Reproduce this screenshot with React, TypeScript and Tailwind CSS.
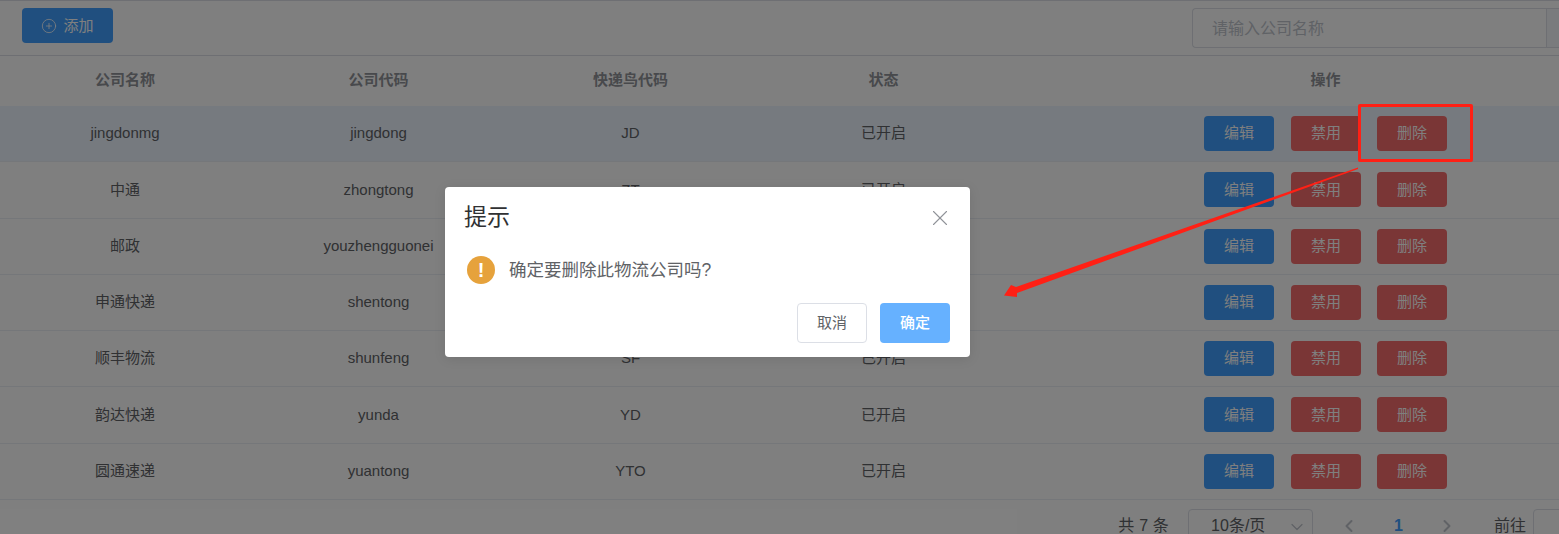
import { ChevronDown, ChevronLeft, ChevronRight, CirclePlus, X } from "lucide-react";

const rows = [
  ["jingdonmg", "jingdong", "JD"],
  ["中通", "zhongtong", "ZT"],
  ["邮政", "youzhengguonei", "YZ"],
  ["申通快递", "shentong", "ST"],
  ["顺丰物流", "shunfeng", "SF"],
  ["韵达快递", "yunda", "YD"],
  ["圆通速递", "yuantong", "YTO"],
];

const font = "font-['Liberation_Sans','Noto_Sans_CJK_SC',sans-serif]";

function TableButton({ label, danger }: { label: string; danger?: boolean }) {
  return (
    <button className={`w-[70px] h-[35px] rounded-[4px] text-white text-[15px] ${danger ? "bg-[#f56c6c]" : "bg-[#409eff]"}`}>
      {label}
    </button>
  );
}

export default function App() {
  return (
    <div className={`relative w-[1559px] h-[534px] overflow-hidden bg-white ${font}`}>
      <div className="w-[1640px]">
        <div className="h-[56px] border-t border-b border-t-[#dcdfe6] border-b-[#dcdfe6] flex justify-between pl-[22px] pt-[7px]">
          <button className="w-[91px] h-[35px] rounded-[4px] bg-[#409eff] text-white text-[15px] flex items-center justify-center gap-[6px]">
            <CirclePlus size={16} strokeWidth={1.2} />
            <span className="pt-px">添加</span>
          </button>
          <div className="w-[448px] h-[40px] border border-[#dcdfe6] rounded-l-[4px] border-r-0 flex">
            <input
              placeholder="请输入公司名称"
              className="w-[353px] pl-[19px] pt-[2px] text-[16px] outline-none placeholder:text-[#c0c4cc]"
            />
            <div className="flex-1 bg-[#f5f7fa] border-l border-[#dcdfe6]" />
          </div>
        </div>
        <div className="grid grid-cols-[250px_257px_247px_259px_625px] h-[50px] pb-[2px] items-center text-center text-[15px] font-bold text-[#909399]">
          <div>公司名称</div>
          <div>公司代码</div>
          <div>快递鸟代码</div>
          <div>状态</div>
          <div>操作</div>
        </div>
        {rows.map((r, i) => (
          <div
            key={r[1]}
            className={`grid grid-cols-[250px_257px_247px_259px_625px] h-[56.25px] items-center text-center text-[15px] text-[#606266] border-b border-[#ebeef5] ${i === 0 ? "bg-[#ecf5ff]" : ""}`}
          >
            <div>{r[0]}</div>
            <div>{r[1]}</div>
            <div>{r[2]}</div>
            <div>已开启</div>
            <div className="flex justify-center">
              <TableButton label="编辑" />
              <div className="w-[17px]" />
              <TableButton label="禁用" danger />
              <div className="w-[16px]" />
              <TableButton label="删除" danger />
            </div>
          </div>
        ))}
        <div className="flex items-start justify-end pr-[57px] pt-[9px] text-[#606266] text-[16px] leading-[16px]">
          <span className="mt-[9px] mr-[19px] tracking-[0.2px]">共 7 条</span>
          <div className="w-[125px] h-[40px] border border-[#dcdfe6] rounded-[4px] flex justify-between pl-[22px] pr-[5px] mr-[26px]">
            <span className="mt-[8px]">10条/页</span>
            <ChevronDown size={20} strokeWidth={1.5} className="text-[#c0c4cc] mt-[7px]" />
          </div>
          <ChevronLeft size={20} strokeWidth={2.4} className="text-[#c0c4cc] mt-[7px]" />
          <span className="mt-[9px] ml-[35px] mr-[34px] text-[#409eff] font-bold">1</span>
          <ChevronRight size={20} strokeWidth={2.4} className="text-[#c0c4cc] mt-[7px]" />
          <span className="mt-[9px] ml-[37px] mr-[7px]">前往</span>
          <div className="w-[50px] h-[40px] border border-[#dcdfe6] rounded-[4px]" />
        </div>
      </div>

      <div className="absolute inset-0 bg-black/50" />

      <div className="absolute left-[445px] top-[187px] w-[525px] h-[170px] bg-white rounded-[4px] shadow-[0_2px_12px_rgba(0,0,0,0.1)] flex flex-col">
        <div className="flex items-center justify-between pl-[19px] pr-[17px] pt-[14px]">
          <span className="text-[23px] leading-[34px] -mt-px text-[#303133]">提示</span>
          <X size={26} strokeWidth={1} className="text-[#909399]" />
        </div>
        <div className="flex items-center pl-[22px] mt-[19px] h-[34px]">
          <span className="w-[28px] h-[28px] rounded-full bg-[#e6a23c] text-white flex items-center justify-center text-[20px] font-bold">!</span>
          <span className="ml-[14px] text-[17.5px] text-[#606266]">确定要删除此物流公司吗?</span>
        </div>
        <div className="flex justify-end gap-[13px] pr-[20px] mt-[16px]">
          <button className="w-[70px] h-[40px] rounded-[4px] border border-[#dcdfe6] text-[15px] text-[#606266]">取消</button>
          <button className="w-[70px] h-[40px] rounded-[4px] bg-[#66b1ff] text-[15px] font-medium text-white">确定</button>
        </div>
      </div>

      <div className="absolute left-[1358px] top-[104px] w-[115px] h-[58px] border-[3px] border-[#ff2015] rounded-[2px]" />
      <svg className="absolute left-0 top-0" width="1559" height="534" viewBox="0 0 1559 534" fill="none">
        <polygon points="1358,167.5 1016,287 1011,285 1004,295.5 1017,297 1017,293 1358,169" fill="#ff2015" />
      </svg>
    </div>
  );
}
